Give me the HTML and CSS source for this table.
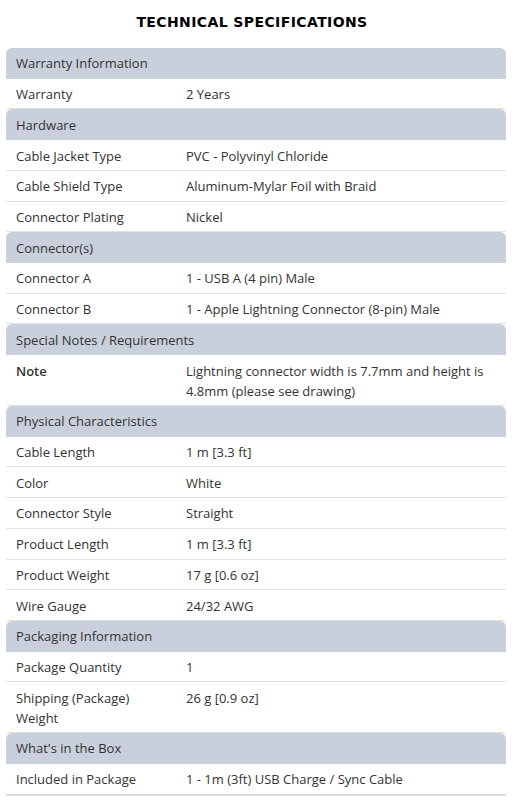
FILE: index.html
```html
<!DOCTYPE html>
<html>
<head>
<meta charset="utf-8">
<link rel="stylesheet" href="styles.css">
</head>
<body>
<div class="page">
  <h1 class="title">TECHNICAL SPECIFICATIONS</h1>
  <div class="specs">
    <div class="group">Warranty Information</div>
    <div class="row"><div class="label">Warranty</div><div class="value">2 Years</div></div>

    <div class="group">Hardware</div>
    <div class="row"><div class="label">Cable Jacket Type</div><div class="value">PVC - Polyvinyl Chloride</div></div>
    <div class="row"><div class="label">Cable Shield Type</div><div class="value">Aluminum-Mylar Foil with Braid</div></div>
    <div class="row"><div class="label">Connector Plating</div><div class="value">Nickel</div></div>

    <div class="group">Connector(s)</div>
    <div class="row"><div class="label">Connector A</div><div class="value">1 - USB A (4 pin) Male</div></div>
    <div class="row"><div class="label">Connector B</div><div class="value">1 - Apple Lightning Connector (8-pin) Male</div></div>

    <div class="group">Special Notes / Requirements</div>
    <div class="row"><div class="label strong">Note</div><div class="value">Lightning connector width is 7.7mm and height is 4.8mm (please see drawing)</div></div>

    <div class="group">Physical Characteristics</div>
    <div class="row"><div class="label">Cable Length</div><div class="value">1 m [3.3 ft]</div></div>
    <div class="row"><div class="label">Color</div><div class="value">White</div></div>
    <div class="row"><div class="label">Connector Style</div><div class="value">Straight</div></div>
    <div class="row"><div class="label">Product Length</div><div class="value">1 m [3.3 ft]</div></div>
    <div class="row"><div class="label">Product Weight</div><div class="value">17 g [0.6 oz]</div></div>
    <div class="row"><div class="label">Wire Gauge</div><div class="value">24/32 AWG</div></div>

    <div class="group">Packaging Information</div>
    <div class="row"><div class="label">Package Quantity</div><div class="value">1</div></div>
    <div class="row"><div class="label">Shipping (Package) Weight</div><div class="value">26 g [0.9 oz]</div></div>

    <div class="group">What's in the Box</div>
    <div class="row last"><div class="label">Included in Package</div><div class="value">1 - 1m (3ft) USB Charge / Sync Cable</div></div>
  </div>
</div>
</body>
</html>
```

FILE: styles.css
```css
html, body {
  margin: 0;
  padding: 0;
  background: #ffffff;
}

.page {
  padding: 0 7px 0 6px;
  font-family: "Open Sans", "Liberation Sans", sans-serif;
  font-size: 13px;
  color: #333333;
}

.title {
  margin: 0;
  padding: 14px 8px 0 0;
  height: 48px;
  box-sizing: border-box;
  text-align: center;
  font-family: "DejaVu Sans", Verdana, sans-serif;
  font-weight: bold;
  font-size: 14px;
  letter-spacing: 0.4px;
  line-height: 16px;
  color: #000000;
}

.specs {
  width: 500px;
  display: flex;
  flex-direction: column;
}

.group {
  background: #c9d0dc;
  border-radius: 6px 6px 0 0;
  padding: 5.37px 10px;
  line-height: 20px;
}

.row {
  display: grid;
  grid-template-columns: 170px 1fr;
  border-bottom: 1px solid #e1e1e1;
  line-height: 20px;
}

.row .label,
.row .value {
  padding: 5.37px 10px 4.37px;
}

.row.last {
  border-bottom: 2px solid #dcdcdc;
}

.strong {
  font-weight: 600;
}
```
